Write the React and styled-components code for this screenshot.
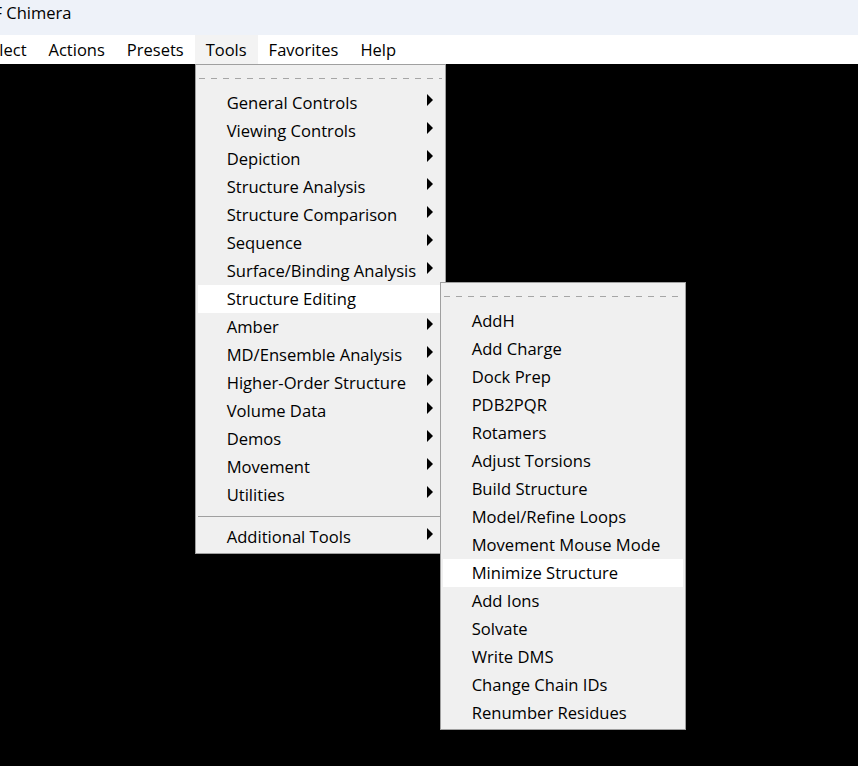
import React from 'react'
import styled, { createGlobalStyle } from 'styled-components'

const GlobalStyle = createGlobalStyle`
  html, body {
    margin: 0;
    padding: 0;
    height: 100%;
  }
  body {
    font-family: 'Open Sans', 'Noto Sans', sans-serif;
    background: #000;
    color: #000;
  }
  #root {
    height: 100%;
  }
`

const Window = styled.div`
  height: 100vh;
  display: flex;
  flex-direction: column;
  overflow: hidden;
`

const TitleBar = styled.div`
  height: 35px;
  flex: none;
  background: #eef2f9;
  font-size: 16.5px;
  line-height: 26px;
  white-space: nowrap;
  overflow: hidden;

  span {
    display: inline-block;
    margin-left: -38px;
  }
`

const MenuBar = styled.div`
  height: 29px;
  flex: none;
  display: flex;
  background: #fff;
  margin-left: -30px;
  font-size: 16.5px;
  line-height: 29px;
  position: relative;
  z-index: 2;
`

const MenuBarItem = styled.div`
  position: relative;
  padding: 0 11px;
  white-space: nowrap;
  background: ${p => (p.$open ? '#f3f3f3' : 'transparent')};
`

const Viewport = styled.div`
  flex: 1;
  background: #000;
`

const Menu = styled.div`
  position: absolute;
  box-sizing: border-box;
  width: ${p => p.$width}px;
  background: #f0f0f0;
  border: 1px solid #a0a0a0;
  padding: 2px;
  font-size: 16.6px;
  text-align: left;
`

const DropMenu = styled(Menu)`
  top: 100%;
  left: 0;
`

const SubMenu = styled(Menu)`
  top: -3px;
  left: calc(100% - 3px);
  z-index: 3;
`

const Tearoff = styled.div`
  height: 22px;
  display: flex;
  align-items: center;

  &::after {
    content: '';
    flex: 1;
    height: 1px;
    margin: 1px 1px 0;
    background: repeating-linear-gradient(
      to right,
      #a6a6a6 0 6px,
      transparent 6px 12px
    );
  }
`

const Row = styled.div`
  position: relative;
  height: 28px;
  line-height: 28px;
  display: flex;
  justify-content: space-between;
  padding: 0 10px 0 29px;
  white-space: nowrap;
  background: ${p => (p.$active ? '#fff' : 'transparent')};
`

const Arrow = styled.span`
  width: 0;
  height: 0;
  margin-top: 5px;
  border-left: 6px solid #000;
  border-top: 6px solid transparent;
  border-bottom: 6px solid transparent;
`

const Separator = styled.div`
  height: 14px;
  display: flex;
  align-items: center;

  &::after {
    content: '';
    flex: 1;
    height: 1px;
    margin-right: 3px;
    background: #a0a0a0;
  }
`

const toolItems = [
  'General Controls',
  'Viewing Controls',
  'Depiction',
  'Structure Analysis',
  'Structure Comparison',
  'Sequence',
  'Surface/Binding Analysis',
  'Structure Editing',
  'Amber',
  'MD/Ensemble Analysis',
  'Higher-Order Structure',
  'Volume Data',
  'Demos',
  'Movement',
  'Utilities'
]

const editingItems = [
  'AddH',
  'Add Charge',
  'Dock Prep',
  'PDB2PQR',
  'Rotamers',
  'Adjust Torsions',
  'Build Structure',
  'Model/Refine Loops',
  'Movement Mouse Mode',
  'Minimize Structure',
  'Add Ions',
  'Solvate',
  'Write DMS',
  'Change Chain IDs',
  'Renumber Residues'
]

const OPEN_TOOL = 'Structure Editing'
const HOVER_EDIT = 'Minimize Structure'

function EditingMenu () {
  return (
    <SubMenu $width={246}>
      <Tearoff />
      {editingItems.map(label => (
        <Row key={label} $active={label === HOVER_EDIT}>
          {label}
        </Row>
      ))}
    </SubMenu>
  )
}

function ToolsMenu () {
  return (
    <DropMenu $width={251}>
      <Tearoff />
      {toolItems.map(label => {
        const open = label === OPEN_TOOL
        return (
          <Row key={label} $active={open}>
            {label}
            {!open && <Arrow />}
            {open && <EditingMenu />}
          </Row>
        )
      })}
      <Separator />
      <Row>
        Additional Tools
        <Arrow />
      </Row>
    </DropMenu>
  )
}

const menus = ['Select', 'Actions', 'Presets', 'Tools', 'Favorites', 'Help']

export default function App () {
  return (
    <Window>
      <GlobalStyle />
      <TitleBar>
        <span>UCSF Chimera</span>
      </TitleBar>
      <MenuBar>
        {menus.map(m => (
          <MenuBarItem key={m} $open={m === 'Tools'}>
            {m}
            {m === 'Tools' && <ToolsMenu />}
          </MenuBarItem>
        ))}
      </MenuBar>
      <Viewport />
    </Window>
  )
}
